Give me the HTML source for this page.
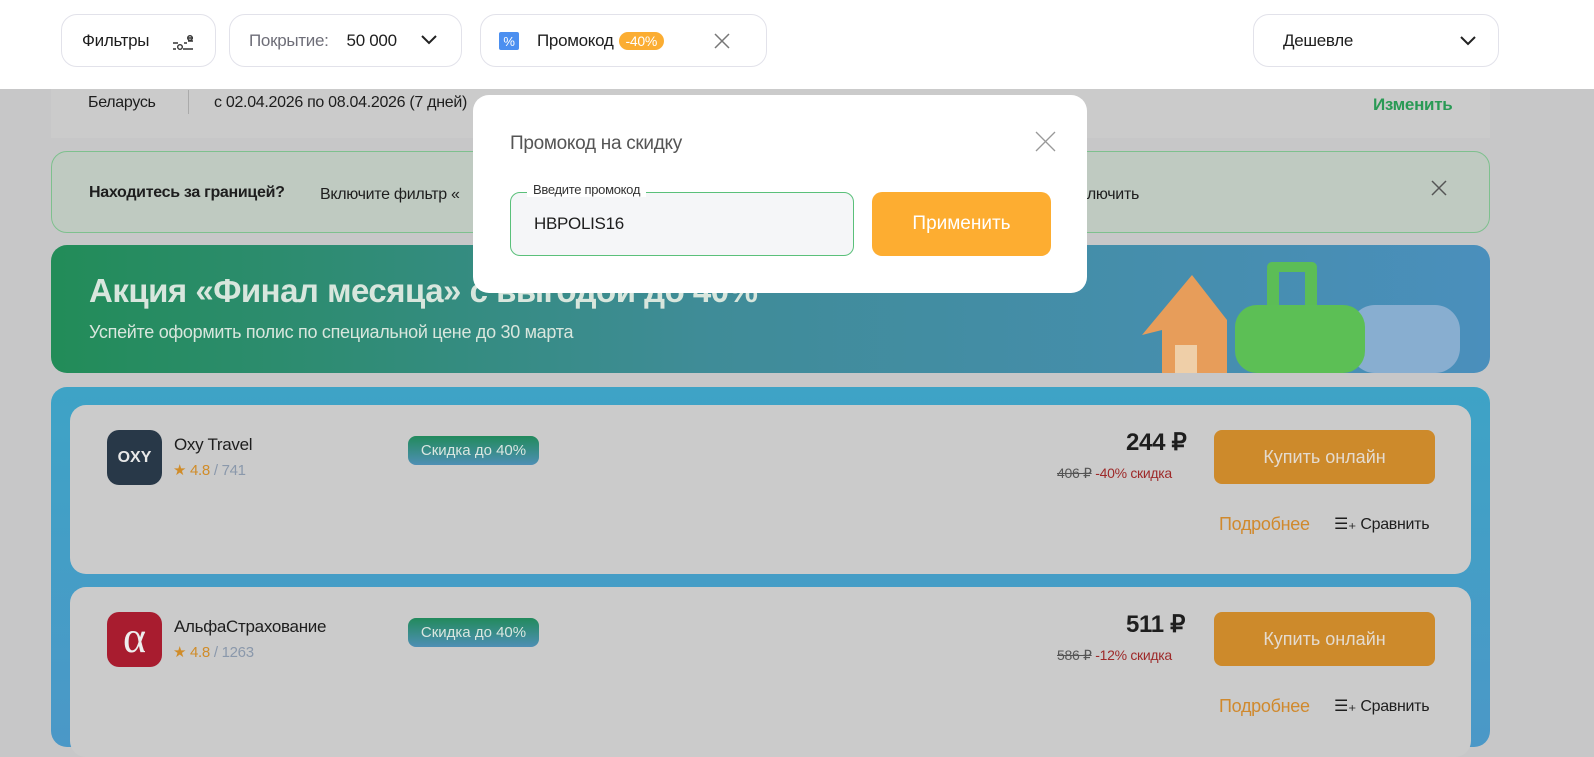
<!DOCTYPE html>
<html><head><meta charset="utf-8"><style>
*{box-sizing:border-box;margin:0;padding:0}
body{width:1594px;height:738px;overflow:hidden;background:#c7c7c8;font-family:"Liberation Sans",sans-serif;color:#1e1e1e;position:relative}
.abs{position:absolute}
.hdr{left:0;top:0;width:1594px;height:89px;background:#fff}
.pill{position:absolute;top:14px;height:53px;border:1px solid #e2e2ea;border-radius:16px;background:#fff;display:flex;align-items:center;font-size:17px;letter-spacing:-0.3px}
.t{position:absolute;white-space:nowrap;letter-spacing:-0.3px}
</style></head><body>
<div class="abs hdr"></div>
<div class="pill" style="left:61px;width:155px;padding-left:20px">Фильтры
<svg class="abs" style="left:109px;top:17px" width="24" height="20" viewBox="0 0 24 20" fill="none" stroke="#333" stroke-width="1.4"><path d="M2 11h5M13 11h3M2 17h3M12 17h10M17 6h5M17 9h5"/><circle cx="9" cy="15" r="2.3"/><circle cx="19" cy="6" r="2.3"/></svg></div>
<div class="pill" style="left:229px;width:233px;padding-left:19px"><span style="color:#6e6e78">Покрытие:</span><span style="margin-left:18px">50 000</span>
<svg class="abs" style="left:190px;top:19px" width="18" height="12" viewBox="0 0 18 12" fill="none" stroke="#222" stroke-width="2"><path d="M2 2l7 7 7-7"/></svg></div>
<div class="pill" style="left:480px;width:287px;padding-left:56px">Промокод<span style="background:#fbad32;color:#fff;border-radius:9px;font-size:14px;padding:1px 7px;margin-left:5px">-40%</span>
<svg class="abs" style="left:18px;top:17px" width="20" height="18" viewBox="0 0 20 18"><rect width="20" height="18" rx="2" fill="#4b8ff0"/><text x="10" y="14" fill="#fff" font-size="13" font-family="Liberation Sans" text-anchor="middle">%</text></svg>
<svg class="abs" style="left:232px;top:17px" width="18" height="18" viewBox="0 0 18 18" stroke="#777" stroke-width="1.5"><path d="M2 2l14 14M16 2L2 16"/></svg></div>
<div class="pill" style="left:1253px;width:246px;padding-left:29px">Дешевле
<svg class="abs" style="left:205px;top:20px" width="18" height="12" viewBox="0 0 18 12" fill="none" stroke="#222" stroke-width="2"><path d="M2 2l7 7 7-7"/></svg></div>

<div class="abs" style="left:51px;top:89px;width:1439px;height:49px;background:#cbcbcb"></div>
<div class="t" style="left:88px;top:94px;font-size:16px">Беларусь</div>
<div class="abs" style="left:188px;top:90px;width:1px;height:24px;background:#aaa"></div>
<div class="t" style="left:214px;top:94px;font-size:16px">с 02.04.2026 по 08.04.2026 (7 дней)</div>
<div class="t" style="left:1373px;top:95px;font-size:17px;font-weight:bold;color:#2a9a55">Изменить</div>

<div class="abs" style="left:51px;top:151px;width:1439px;height:82px;background:#bfcac1;border:1px solid #7ec08e;border-radius:16px"></div>
<div class="t" style="left:89px;top:184px;font-size:16px;font-weight:bold">Находитесь за границей?</div>
<div class="t" style="left:320px;top:186px;font-size:16px">Включите фильтр «</div>
<div class="t" style="left:1080px;top:186px;font-size:16px">ключить</div>
<svg class="abs" style="left:1431px;top:180px" width="16" height="16" viewBox="0 0 16 16" stroke="#555" stroke-width="1.5"><path d="M1 1l14 14M15 1L1 15"/></svg>

<div class="abs" style="left:51px;top:245px;width:1439px;height:128px;border-radius:16px;background:linear-gradient(90deg,#228c58,#3f8c97 45%,#4a8fbc)"></div>
<div class="t" style="left:89px;top:272px;font-size:33px;font-weight:bold;color:#d8e6dd;letter-spacing:-0.5px">Акция «Финал месяца» с выгодой до 40%</div>
<div class="t" style="left:89px;top:322px;font-size:18px;color:#d8e6dd">Успейте оформить полис по специальной цене до 30 марта</div>
<svg class="abs" style="left:1140px;top:260px" width="320" height="113" viewBox="0 0 320 113">
<path d="M22 113V70l-20 5 50-60 35 45v53z" fill="#e79d5a"/><rect x="35" y="85" width="22" height="28" fill="#efcfa8"/>
<rect x="127" y="5" width="12" height="60" rx="5" fill="#5cbd56"/><rect x="165" y="5" width="12" height="60" rx="5" fill="#5cbd56"/><rect x="127" y="2" width="50" height="10" rx="5" fill="#5cbd56"/>
<rect x="210" y="45" width="110" height="68" rx="25" fill="#88aed0"/>
<rect x="95" y="45" width="130" height="68" rx="22" fill="#5cbf55"/></svg>

<div class="abs" style="left:51px;top:387px;width:1439px;height:360px;border-radius:16px;background:linear-gradient(180deg,#3ea3c6,#4b98c7)"></div>
<div class="abs" style="left:70px;top:405px;width:1401px;height:169px;border-radius:16px;background:#cbcbcb"></div>
<div class="abs" style="left:70px;top:587px;width:1401px;height:170px;border-radius:16px;background:#cbcbcb"></div>

<div class="abs" style="left:107px;top:430px;width:55px;height:55px;border-radius:12px;background:#283848;color:#e8e8e8;font-weight:bold;font-size:16px;text-align:center;line-height:55px">OXY</div>
<div class="t" style="left:174px;top:435px;font-size:17px">Oxy Travel</div>
<div class="t" style="left:173px;top:461px;font-size:15px;color:#d08c29">★ 4.8 <span style="color:#8a98ab">/ 741</span></div>
<div class="abs" style="left:408px;top:436px;width:131px;height:29px;border-radius:8px;background:linear-gradient(180deg,#228a5c,#4e8fb5);color:#d9e6e0;font-size:15px;text-align:center;line-height:29px">Скидка до 40%</div>
<div class="t" style="left:1126px;top:428px;font-size:24px;font-weight:bold">244 ₽</div>
<div class="t" style="left:1057px;top:465px;font-size:14px"><s style="color:#555">406 ₽</s> <span style="color:#9e2a2a">-40% скидка</span></div>
<div class="abs" style="left:1214px;top:430px;width:221px;height:54px;border-radius:8px;background:#cd8a2b;color:#e4dbcf;font-size:18px;text-align:center;line-height:54px">Купить онлайн</div>
<div class="t" style="left:1219px;top:514px;font-size:18px;color:#d0892d">Подробнее</div>
<div class="t" style="left:1334px;top:514px;font-size:16px">☰₊ Сравнить</div>

<div class="abs" style="left:107px;top:612px;width:55px;height:55px;border-radius:12px;background:#a81c2f;color:#eee;font-size:44px;text-align:center;line-height:52px;font-family:'Liberation Serif',serif">α</div>
<div class="t" style="left:174px;top:617px;font-size:17px">АльфаСтрахование</div>
<div class="t" style="left:173px;top:643px;font-size:15px;color:#d08c29">★ 4.8 <span style="color:#8a98ab">/ 1263</span></div>
<div class="abs" style="left:408px;top:618px;width:131px;height:29px;border-radius:8px;background:linear-gradient(180deg,#228a5c,#4e8fb5);color:#d9e6e0;font-size:15px;text-align:center;line-height:29px">Скидка до 40%</div>
<div class="t" style="left:1126px;top:610px;font-size:24px;font-weight:bold">511 ₽</div>
<div class="t" style="left:1057px;top:647px;font-size:14px"><s style="color:#555">586 ₽</s> <span style="color:#9e2a2a">-12% скидка</span></div>
<div class="abs" style="left:1214px;top:612px;width:221px;height:54px;border-radius:8px;background:#cd8a2b;color:#e4dbcf;font-size:18px;text-align:center;line-height:54px">Купить онлайн</div>
<div class="t" style="left:1219px;top:696px;font-size:18px;color:#d0892d">Подробнее</div>
<div class="t" style="left:1334px;top:696px;font-size:16px">☰₊ Сравнить</div>

<div class="abs" style="left:473px;top:95px;width:614px;height:198px;background:#fff;border-radius:16px"></div>
<div class="t" style="left:510px;top:133px;font-size:19px;color:#555">Промокод на скидку</div>
<svg class="abs" style="left:1035px;top:131px" width="21" height="21" viewBox="0 0 21 21" stroke="#999" stroke-width="1.3"><path d="M1 1l19 19M20 1L1 20"/></svg>
<div class="abs" style="left:510px;top:192px;width:344px;height:64px;border:1px solid #5ac07a;border-radius:10px;background:#f5f6f8"></div>
<div class="t" style="left:527px;top:182px;font-size:13px;color:#333;background:#fff;padding:0 6px">Введите промокод</div>
<div class="t" style="left:534px;top:214px;font-size:17px">HBPOLIS16</div>
<div class="abs" style="left:872px;top:192px;width:179px;height:64px;border-radius:10px;background:#fdad31;color:#fff;font-size:19px;text-align:center;line-height:64px">Применить</div>
</body></html>
